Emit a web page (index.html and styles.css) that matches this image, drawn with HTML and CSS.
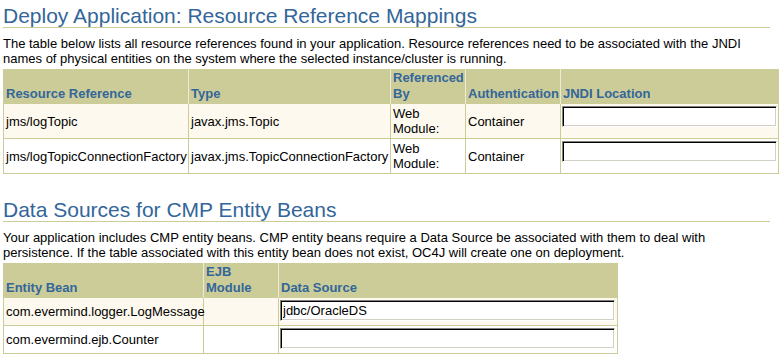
FILE: index.html
```html
<!DOCTYPE html>
<html lang="en">
<head>
<meta charset="utf-8">
<title>Deploy Application: Resource Reference Mappings</title>
<link rel="stylesheet" href="styles.css">
</head>
<body>
<div class="page">
  <h1 class="section-title">Deploy Application: Resource Reference Mappings</h1>
  <p class="instructions">The table below lists all resource references found in your application. Resource references need to be associated with the JNDI names of physical entities on the system where the selected instance/cluster is running.</p>
  <table class="data-table refs">
    <thead>
      <tr>
        <th class="c-ref">Resource Reference</th>
        <th class="c-type">Type</th>
        <th class="c-by">Referenced By</th>
        <th class="c-auth">Authentication</th>
        <th class="c-jndi">JNDI Location</th>
      </tr>
    </thead>
    <tbody>
      <tr class="band">
        <td>jms/logTopic</td>
        <td>javax.jms.Topic</td>
        <td>Web Module:</td>
        <td>Container</td>
        <td class="field-cell"><input class="text-field jndi-field" type="text" value=""></td>
      </tr>
      <tr>
        <td class="nowrap">jms/logTopicConnectionFactory</td>
        <td class="nowrap">javax.jms.TopicConnectionFactory</td>
        <td>Web Module:</td>
        <td>Container</td>
        <td class="field-cell"><input class="text-field jndi-field" type="text" value=""></td>
      </tr>
    </tbody>
  </table>

  <h1 class="section-title second">Data Sources for CMP Entity Beans</h1>
  <p class="instructions">Your application includes CMP entity beans. CMP entity beans require a Data Source be associated with them to deal with persistence. If the table associated with this entity bean does not exist, OC4J will create one on deployment.</p>
  <table class="data-table beans">
    <thead>
      <tr>
        <th class="c-bean">Entity Bean</th>
        <th class="c-module">EJB Module</th>
        <th class="c-ds">Data Source</th>
      </tr>
    </thead>
    <tbody>
      <tr class="band">
        <td class="nowrap">com.evermind.logger.LogMessage</td>
        <td></td>
        <td class="field-cell"><input class="text-field ds-field" type="text" value="jdbc/OracleDS"></td>
      </tr>
      <tr>
        <td class="nowrap">com.evermind.ejb.Counter</td>
        <td></td>
        <td class="field-cell"><input class="text-field ds-field" type="text" value=""></td>
      </tr>
    </tbody>
  </table>
</div>
</body>
</html>
```

FILE: styles.css
```css
html, body {
  margin: 0;
  padding: 0;
  background: #ffffff;
}

body {
  font-family: "Liberation Sans", Arial, sans-serif;
  font-size: 13px;
  color: #000000;
}

.page {
  width: 767px;
  padding: 4px 0 0 3px;
}

.section-title {
  margin: 0;
  font-size: 21px;
  font-weight: normal;
  line-height: 23px;
  color: #336699;
  border-bottom: 1px solid #cccc99;
}

.section-title.second {
  margin-top: 24px;
}

.instructions {
  margin: 8px 0 3px 0;
  line-height: 15px;
}

.data-table {
  border-collapse: separate;
  border-spacing: 0;
  table-layout: fixed;
}

.refs { width: 776px; }
.beans { width: 615px; }

.data-table th,
.data-table td {
  box-sizing: border-box;
  text-align: left;
}

.data-table th {
  background: #cccc99;
  color: #336699;
  font-weight: bold;
  line-height: 16px;
  padding: 1px 2px 2px 2px;
  vertical-align: bottom;
  border-left: 1px solid #ecebd6;
}

.data-table th:first-child {
  border-left-color: #cccc99;
}

.data-table th:last-child {
  border-right: 1px solid #cccc99;
}

.data-table td {
  line-height: 15px;
  padding: 2px;
  vertical-align: middle;
  border-left: 1px solid #cccc99;
  border-bottom: 1px solid #cccc99;
}

.data-table td:last-child {
  border-right: 1px solid #cccc99;
}

.data-table tr.band td {
  background: #fdf9ee;
}

.nowrap { white-space: nowrap; }

.c-ref { width: 185px; }
.c-type { width: 202px; }
.c-by { width: 75px; }
.c-auth { width: 95px; }
.c-jndi { width: 219px; }

.c-bean { width: 200px; }
.c-module { width: 75px; }
.c-ds { width: 340px; }

.data-table td.field-cell {
  vertical-align: top;
  padding: 2px 1px 2px 1px;
}

.beans td.field-cell {
  padding-bottom: 4px;
}

.text-field {
  display: block;
  box-sizing: border-box;
  height: 21px;
  margin: 0;
  padding: 1px 2px;
  font-family: "Liberation Sans", Arial, sans-serif;
  font-size: 13px;
  color: #000000;
  background: #ffffff;
  border-style: solid;
  border-width: 1px;
  border-color: #808080 #ffffff #ffffff #808080;
  box-shadow: inset 1px 1px 0 #000000, inset -1px -1px 0 #d4d0c8;
  outline: none;
}

.jndi-field { width: 215px; }
.ds-field { width: 335px; }
```
